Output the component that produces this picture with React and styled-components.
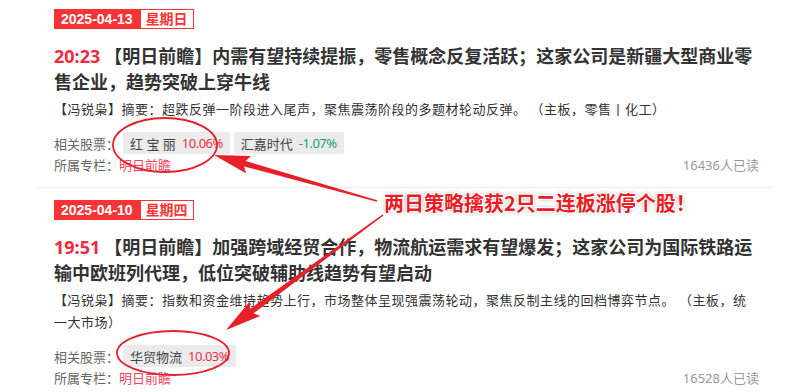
import React from 'react'
import styled, { createGlobalStyle } from 'styled-components'

const GlobalStyle = createGlobalStyle`
  body {
    margin: 0;
    background: #fff;
    font-family: "Noto Sans", "Noto Sans CJK SC", sans-serif;
  }
`

const Page = styled.div`
  position: relative;
  width: 801px;
  height: 392px;
  overflow: hidden;
`

const List = styled.div`
  margin-left: 38px;
  width: 735px;
`

const Item = styled.div`
  padding: ${p => (p.$first ? '7px' : '10px')} 14px 12px 16px;
  border-bottom: 1px solid #ececec;
`

const DateBadge = styled.div`
  display: inline-flex;
  height: 20px;
  font-family: "Liberation Sans", "Noto Sans CJK SC", sans-serif;
  font-size: 14px;
  font-weight: bold;
  line-height: 20px;
`

const DatePart = styled.span`
  background: #fa3434;
  color: #fff;
  padding: 0 7px;
`

const WeekPart = styled.span`
  border: 1px solid #fa3434;
  color: #fa3434;
  background: #fff;
  padding: 0 5px;
  line-height: 18px;
`

const Title = styled.h3`
  margin: 14px 0 0;
  font-size: 18px;
  line-height: 26px;
  font-weight: bold;
  color: #333;
`

const Time = styled.span`
  color: #f2293e;
  margin-right: 4px;
`

const Summary = styled.p`
  margin: 3px 0 0;
  max-width: 700px;
  font-size: 13px;
  letter-spacing: 0.5px;
  line-height: 22px;
  color: #333;
`

const StockRow = styled.div`
  display: flex;
  align-items: center;
  gap: 4px;
  height: 22px;
  margin-top: 12px;
`

const Label = styled.span`
  font-size: 13px;
  color: #666;
`

const Tag = styled.span`
  display: inline-flex;
  align-items: center;
  gap: 6px;
  height: 22px;
  padding: 0 7px;
  background: #ebebeb;
  border-radius: 2px;
  font-size: 13px;
  color: #444;
`

const Change = styled.span`
  font-size: 13px;
  letter-spacing: -0.5px;
  color: ${p => (p.$up ? '#ee2f4a' : '#14a07a')};
`

const ColumnRow = styled.div`
  display: flex;
  justify-content: space-between;
  align-items: center;
  margin-top: 1px;
  font-size: 13px;
  line-height: 20px;
`

const ColumnLink = styled.span`
  color: #f5455a;
`

const Reads = styled.span`
  color: #999;
`

const Overlay = styled.svg`
  position: absolute;
  left: 0;
  top: 0;
  pointer-events: none;
`

const Callout = styled.div`
  position: absolute;
  left: 384px;
  top: 189px;
  font-family: "Noto Sans CJK SC", sans-serif;
  font-size: 20px;
  font-weight: bold;
  line-height: 28px;
  white-space: nowrap;
  color: #ea1c24;
  text-shadow: -1px -1px 0 #fff, 1px -1px 0 #fff, -1px 1px 0 #fff, 1px 1px 0 #fff,
    0 0 4px rgba(0, 0, 0, 0.45);
`

const articles = [
  {
    date: '2025-04-13',
    week: '星期日',
    time: '20:23',
    title: '【明日前瞻】内需有望持续提振，零售概念反复活跃；这家公司是新疆大型商业零售企业，趋势突破上穿牛线',
    summary: '【冯锐枭】摘要：超跌反弹一阶段进入尾声，聚焦震荡阶段的多题材轮动反弹。 （主板，零售丨化工）',
    stocks: [
      { name: '红 宝 丽', change: '10.06%', up: true },
      { name: '汇嘉时代', change: '-1.07%', up: false },
    ],
    reads: '16436人已读',
  },
  {
    date: '2025-04-10',
    week: '星期四',
    time: '19:51',
    title: '【明日前瞻】加强跨域经贸合作，物流航运需求有望爆发；这家公司为国际铁路运输中欧班列代理，低位突破辅助线趋势有望启动',
    summary: '【冯锐枭】摘要：指数和资金维持趋势上行，市场整体呈现强震荡轮动，聚焦反制主线的回档博弈节点。 （主板，统一大市场）',
    stocks: [{ name: '华贸物流', change: '10.03%', up: true }],
    reads: '16528人已读',
  },
]

// tapered arrow: thin at the tail, wide head at the tip
const arrowPoints = (tx, ty, px, py) => {
  const len = Math.hypot(px - tx, py - ty)
  const ux = (px - tx) / len
  const uy = (py - ty) / len
  const nx = -uy
  const ny = ux
  const head = 32
  const hw = 9
  const w0 = 0.8
  const w1 = 2.8
  const cx = px - ux * head
  const cy = py - uy * head
  const pts = [
    [tx + nx * w0, ty + ny * w0],
    [cx + nx * w1, cy + ny * w1],
    [cx - ux * 4 + nx * hw, cy - uy * 4 + ny * hw],
    [px, py],
    [cx - ux * 4 - nx * hw, cy - uy * 4 - ny * hw],
    [cx - nx * w1, cy - ny * w1],
    [tx - nx * w0, ty - ny * w0],
  ]
  return pts.map(p => p.map(v => v.toFixed(1)).join(',')).join(' ')
}

const Article = ({ data, first }) => (
  <Item $first={first}>
    <DateBadge>
      <DatePart>{data.date}</DatePart>
      <WeekPart>{data.week}</WeekPart>
    </DateBadge>
    <Title>
      <Time>{data.time}</Time>
      {data.title}
    </Title>
    <Summary>{data.summary}</Summary>
    <StockRow>
      <Label>相关股票：</Label>
      {data.stocks.map(s => (
        <Tag key={s.name}>
          {s.name}
          <Change $up={s.up}>{s.change}</Change>
        </Tag>
      ))}
    </StockRow>
    <ColumnRow>
      <Label>
        所属专栏：<ColumnLink>明日前瞻</ColumnLink>
      </Label>
      <Reads>{data.reads}</Reads>
    </ColumnRow>
  </Item>
)

const App = () => (
  <Page>
    <GlobalStyle />
    <List>
      {articles.map((a, i) => (
        <Article key={a.date} data={a} first={i === 0} />
      ))}
    </List>
    <Overlay width="801" height="392" viewBox="0 0 801 392">
      <ellipse cx="165" cy="145" rx="52" ry="27" fill="none" stroke="#e3222b" strokeWidth="1.8" />
      <ellipse cx="173" cy="353" rx="56" ry="22" fill="none" stroke="#e3222b" strokeWidth="1.8" />
      <polygon points={arrowPoints(377, 201, 214, 155)} fill="#e8202a" />
      <polygon points={arrowPoints(383, 215, 226, 330)} fill="#e8202a" />
    </Overlay>
    <Callout>两日策略擒获2只二连板涨停个股！</Callout>
  </Page>
)

export default App
